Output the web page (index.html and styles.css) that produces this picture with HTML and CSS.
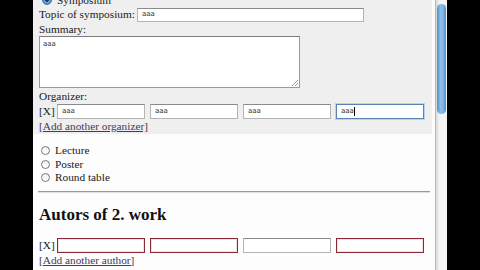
FILE: index.html
```html
<!DOCTYPE html>
<html>
<head>
<meta charset="utf-8">
<link rel="stylesheet" href="styles.css">
</head>
<body>
<div class="screen">
  <div class="page">
    <section class="work">
      <div class="radio-row top"><span class="radio checked"></span>Symposium</div>
      <div class="field-row"><span class="lbl">Topic of symposium:</span><span class="input wide">aaa</span></div>
      <div class="label">Summary:</div>
      <div class="textarea">aaa<span class="grip"></span></div>
      <div class="label org">Organizer:</div>
      <div class="people">
        <a class="remove">[X]</a>
        <span class="input">aaa</span>
        <span class="input">aaa</span>
        <span class="input">aaa</span>
        <span class="input focus">aaa<span class="caret"></span></span>
      </div>
      <a class="add">[Add another organizer]</a>
    </section>
    <div class="types">
      <div class="radio-row"><span class="radio"></span>Lecture</div>
      <div class="radio-row"><span class="radio"></span>Poster</div>
      <div class="radio-row"><span class="radio"></span>Round table</div>
    </div>
    <div class="rule"></div>
    <h2 class="heading">Autors of 2. work</h2>
    <div class="people authors">
      <a class="remove">[X]</a>
      <span class="input error"></span>
      <span class="input error"></span>
      <span class="input"></span>
      <span class="input error"></span>
    </div>
    <a class="add author">[Add another author]</a>
  </div>
  <div class="gap"></div>
  <div class="scrollbar"><div class="thumb"></div></div>
</div>
</body>
</html>
```
FILE: styles.css
```css
html, body {
  margin: 0;
  padding: 0;
  background: #000;
  width: 480px;
  height: 270px;
  overflow: hidden;
}
.screen {
  display: flex;
  height: 270px;
  padding-left: 33px;
  font-family: "Liberation Serif", "Times New Roman", serif;
  font-size: 11.3px;
  line-height: 13px;
  color: #1a1a1a;
  white-space: nowrap;
}
.page {
  width: 399px;
  background: #fdfdfd;
  overflow: hidden;
}
.gap {
  width: 3px;
  background: #fbfbfb;
}
.scrollbar {
  width: 11px;
  background: linear-gradient(to right, #d8d8d8, #f4f4f4 30%, #f4f4f4);
  border-left: 1px solid #b8b8b8;
  padding-top: 4px;
}
.thumb {
  width: 9px;
  margin-left: 1px;
  height: 110px;
  border-radius: 5px;
  background: linear-gradient(to right, #4f8fc9, #8cc0ea 40%, #7db3e2 70%, #4c87c0);
}
.work {
  background: #efefef;
  padding: 0 0 1px 6px;
  margin-top: -7px;
}
.radio-row {
  display: flex;
  align-items: center;
  gap: 5px;
  height: 13.5px;
  padding-left: 2px;
}
.radio-row.top {
  height: 14px;
  padding-left: 3px;
}
.radio {
  width: 7px;
  height: 7px;
  border-radius: 50%;
  border: 1px solid #777;
  background: linear-gradient(#f0f0f0, #fff);
  box-sizing: content-box;
  flex-shrink: 0;
}
.radio.checked {
  width: 8px;
  height: 8px;
  border-color: #3b6fa8;
  background: radial-gradient(circle, #234 0 1.5px, #6fa8dc 2px, #3a78b8 100%);
}
.field-row {
  display: flex;
  align-items: center;
  height: 15px;
}
.lbl {
  width: 98px;
  flex-shrink: 0;
}
.input {
  box-sizing: border-box;
  width: 88px;
  height: 15px;
  flex-shrink: 0;
  border: 1px solid #b4b4b4;
  border-top-color: #8a8a8a;
  background: #fff;
  font-family: "DejaVu Sans", sans-serif;
  font-size: 7px;
  line-height: 13px;
  padding-left: 4px;
  color: #333;
  display: inline-flex;
  align-items: center;
}
.input.wide {
  width: 227px;
  height: 14px;
}
.label {
  height: 13px;
  margin-top: 1px;
}
.label.org {
  margin-top: 2px;
}
.textarea {
  position: relative;
  box-sizing: border-box;
  width: 261px;
  height: 52px;
  border: 1px solid #9a9a9a;
  border-top-color: #7d7d7d;
  background: #fff;
  font-family: "DejaVu Sans", sans-serif;
  font-size: 7px;
  line-height: 10px;
  padding: 2px 3px;
  color: #333;
}
.grip {
  position: absolute;
  right: 1px;
  bottom: 1px;
  width: 6px;
  height: 6px;
  background: linear-gradient(135deg, transparent 45%, #999 45% 55%, transparent 55% 70%, #999 70% 80%, transparent 80%);
}
.people {
  display: flex;
  align-items: center;
  gap: 5px;
  height: 16px;
}
.remove {
  width: 14px;
  margin-right: -1px;
  color: #1a1a1a;
  flex-shrink: 0;
}
.input.focus {
  border: 1px solid #5e82b0;
  box-shadow: 0 0 0 1px #b9d3ee;
}
.caret {
  width: 1px;
  height: 9px;
  background: #000;
}
.add {
  display: block;
  color: #473a5e;
  text-decoration: underline;
  height: 13px;
  margin-top: 1px;
}
.types {
  padding: 10px 0 0 8px;
}
.types .radio-row {
  padding-left: 0;
}
.rule {
  margin: 6px 2px 0 5px;
  border-top: 1px solid #9a9a9a;
  border-bottom: 1px solid #e0e0e0;
}
.heading {
  margin: 13px 0 0 6px;
  font-size: 17px;
  line-height: 18px;
  font-weight: bold;
  color: #111;
  height: 18px;
}
.authors {
  margin: 14px 0 0 6px;
}
.page > .add {
  margin: 0 0 0 6px;
}
.input.error {
  border: 1px solid #8b2a35;
  box-shadow: inset 0 0 0 1px #f5dde0;
}
```
